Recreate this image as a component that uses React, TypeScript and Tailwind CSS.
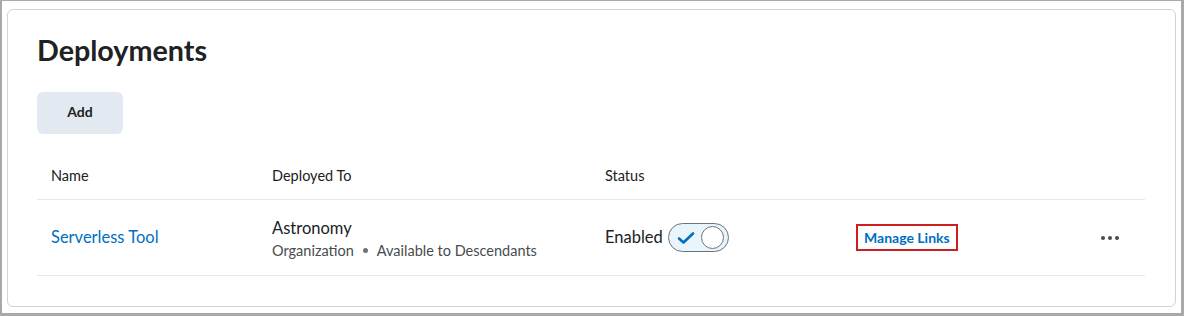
import React from 'react';

const font = { fontFamily: 'Lato, "Noto Sans", sans-serif' };

const Toggle: React.FC = () => (
  <div className="relative flex h-[29px] w-[61px] items-center rounded-full border border-[#6e7376] bg-[#e8f5fd]">
    <svg width="18" height="14" viewBox="0 0 18 14" className="ml-[8px]">
      <path d="M2 7.5 L6.5 11.5 L16 2.5" fill="none" stroke="#006fbf" strokeWidth="2.6" strokeLinecap="round" strokeLinejoin="round" />
    </svg>
    <div className="absolute right-[4px] top-[2px] h-[23px] w-[23px] rounded-full border-[1.5px] border-[#6e7376] bg-white" />
  </div>
);

export default function App() {
  return (
    <div
      style={font}
      className="box-border h-[316px] w-[1184px] border-b-[3px] border-l-2 border-r-[3px] border-t border-[#a9a9a9] bg-white pb-[6px] pl-[5px] pr-[5px] pt-2 text-[#202122]"
    >
      <div className="h-full rounded-md border border-[#cdd5dc] pl-[29px] pr-[30px] pt-[22px]">
        <h1 className="text-[28.7px] font-bold leading-[36px]">Deployments</h1>
        <button className="mt-[24px] h-[42px] w-[86px] rounded-md bg-[#e3e9f1] pb-[3px] text-[14px] font-bold">
          Add
        </button>

        <div className="mt-[18px]">
          <div className="grid h-[48px] grid-cols-[221px_333px_251px_245px_1fr] items-center border-b border-[#e3e9f1] text-[14.5px]">
            <div className="px-[14px]">Name</div>
            <div className="px-[14px]">Deployed To</div>
            <div className="px-[14px]">Status</div>
            <div />
            <div />
          </div>
          <div className="grid h-[76px] grid-cols-[221px_333px_251px_245px_1fr] items-center border-b border-[#e3e9f1]">
            <div className="px-[14px] text-[16.5px] text-[#006fbf]">Serverless Tool</div>
            <div className="px-[14px] pt-[3px]">
              <div className="text-[16.5px] leading-[23px]">Astronomy</div>
              <div className="flex items-center text-[14.5px] leading-[22px] text-[#494c4e]">
                <span>Organization</span>
                <span className="mx-[9px] h-[5px] w-[5px] rounded-full bg-[#6e7376]" />
                <span>Available to Descendants</span>
              </div>
            </div>
            <div className="flex items-center gap-[5px] px-[14px]">
              <span className="text-[16.5px]">Enabled</span>
              <Toggle />
            </div>
            <div className="px-[14px]">
              <span className="inline-block border-2 border-[#cc1f1f] px-[6px] py-[2px] text-[14px] font-bold leading-[19px] text-[#006fbf]">
                Manage Links
              </span>
            </div>
            <div className="flex gap-[3px] px-[14px]">
              <span className="h-[4px] w-[4px] rounded-full bg-[#494c4e]" />
              <span className="h-[4px] w-[4px] rounded-full bg-[#494c4e]" />
              <span className="h-[4px] w-[4px] rounded-full bg-[#494c4e]" />
            </div>
          </div>
        </div>
      </div>
    </div>
  );
}
